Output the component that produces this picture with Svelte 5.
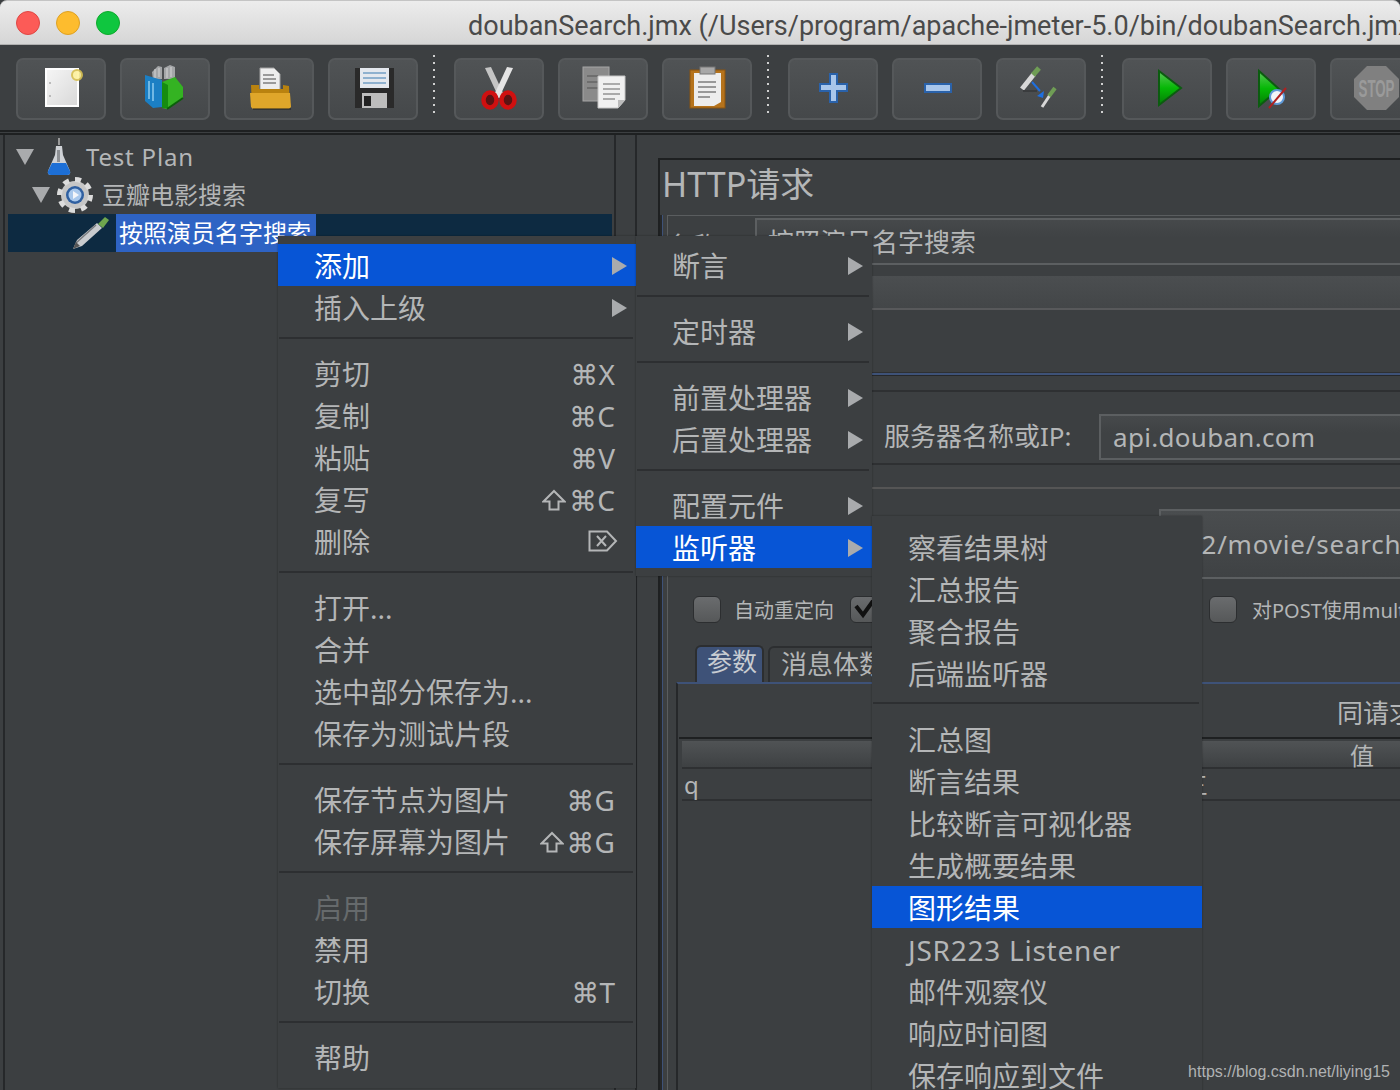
<script>
  const sep = { sep: true };
  const menu1 = [
    { t: '添加', arrow: true, sel: true }, { t: '插入上级', arrow: true }, sep,
    { t: '剪切', k: '⌘X' }, { t: '复制', k: '⌘C' }, { t: '粘贴', k: '⌘V' }, { t: '复写', k: '⌘C', shift: true }, { t: '删除', del: true }, sep,
    { t: '打开...' }, { t: '合并' }, { t: '选中部分保存为...' }, { t: '保存为测试片段' }, sep,
    { t: '保存节点为图片', k: '⌘G' }, { t: '保存屏幕为图片', k: '⌘G', shift: true }, sep,
    { t: '启用', off: true }, { t: '禁用' }, { t: '切换', k: '⌘T' }, sep,
    { t: '帮助' }
  ];
  const menu2 = [
    { t: '断言', arrow: true }, sep, { t: '定时器', arrow: true }, sep,
    { t: '前置处理器', arrow: true }, { t: '后置处理器', arrow: true }, sep,
    { t: '配置元件', arrow: true }, { t: '监听器', arrow: true, sel: true }
  ];
  const menu3 = [
    { t: '察看结果树' }, { t: '汇总报告' }, { t: '聚合报告' }, { t: '后端监听器' }, sep,
    { t: '汇总图' }, { t: '断言结果' }, { t: '比较断言可视化器' }, { t: '生成概要结果' }, { t: '图形结果', sel: true },
    { t: 'JSR223 Listener', latin: true }, { t: '邮件观察仪' }, { t: '响应时间图' }, { t: '保存响应到文件' }
  ];
</script>

{#snippet menu(items, cls)}
  <div class="menu {cls}">
    {#each items as it}
      {#if it.sep}
        <div class="msep"></div>
      {:else}
        <div class="mi" class:sel={it.sel} class:off={it.off} class:latin={it.latin}>
          <span>{it.t}</span>
          {#if it.arrow}<i class="arr"></i>{/if}
          {#if it.k}
            <span class="key">
              {#if it.shift}<svg class="shift" width="24" height="22" viewBox="0 0 24 22"><path d="M12 2L22.500 12.500H16.500V20.500H7.500V12.500H1.500z" fill="none" stroke="#b4b6b7" stroke-width="2"/></svg>{/if}
              {it.k}
            </span>
          {/if}
          {#if it.del}
            <svg class="del" width="30" height="22" viewBox="0 0 30 22"><path d="M1.500 1.500H19L28 11l-9 9.500H1.500z M9 6l9 10M18 6L9 16" fill="none" stroke="#b4b6b7" stroke-width="2"/></svg>
          {/if}
        </div>
      {/if}
    {/each}
  </div>
{/snippet}

<div class="app">
  <header class="title">
    <span class="dot red"></span><span class="dot amber"></span><span class="dot green"></span>
    <span class="ttext">doubanSearch.jmx (/Users/program/apache-jmeter-5.0/bin/doubanSearch.jmx)</span>
  </header>

  <div class="toolbar">
    <div class="tb"><svg viewBox="0 0 90 62"><defs><linearGradient id="pg" x1="0" x2="1" y1="0" y2="1"><stop offset="0" stop-color="#f6f6f6"/><stop offset="1" stop-color="#d8d8d8"/></linearGradient></defs><rect x="30" y="11" width="32" height="37" fill="url(#pg)" stroke="#fff" stroke-width="2"/><circle cx="34" cy="25" r="1" fill="#aaa"/><circle cx="34" cy="38" r="1" fill="#aaa"/><circle cx="61" cy="17" r="5" fill="#fff3a0" stroke="#d8c050" stroke-width="2" opacity=".9"/></svg></div>
    <div class="tb"><svg viewBox="0 0 90 62"><path d="M32 14l6-6 4 1v12l-9 1zM44 10l6-3 5 2v12H44z" fill="#a4a6a8"/><path d="M35 11v9M39 10v9M47 10v10M51 9v10" stroke="#d4d4d4"/><path d="M25 17l17 5v27l-9 1-8-7z" fill="#1b7fc4"/><path d="M29 23v18M33 25v18" stroke="#8ecbee" stroke-width="1.500"/><path d="M42 24l13-5 8 10v11L47 51l-5-1z" fill="#34b322"/><path d="M42 24l6 3v23l-6 0z" fill="#168c10"/><path d="M63 40l-16 11" stroke="#0b5f0a" stroke-width="2"/></svg></div>
    <div class="tb"><svg viewBox="0 0 90 62"><path d="M36 10h14l6 6v16H36z" fill="#ededed" stroke="#a0a0a0"/><path d="M39 17h11M39 21h13M39 25h13" stroke="#9a9a9a" stroke-width="2"/><path d="M27 27h8v4h24v-4l6 1 1 22H28z" fill="#b9820f"/><path d="M26 35h40l1 14-2 2H29l-2-2z" fill="#dfa62a"/><path d="M29 51h38" stroke="#1f2021" stroke-width="2" opacity=".5"/></svg></div>
    <div class="tb"><svg viewBox="0 0 90 62"><path d="M27 10h39v40H27z" fill="#2a2a2a"/><rect x="32" y="10" width="29" height="20" fill="#e4e8ee"/><path d="M35 15h23M35 20h23M35 25h23" stroke="#8fb1cf" stroke-width="2"/><rect x="34" y="35" width="25" height="15" fill="#bdbdbd"/><rect x="36" y="38" width="7" height="10" fill="#222"/></svg></div>
    <div class="sep"></div>
    <div class="tb"><svg viewBox="0 0 90 62"><path d="M31 10l6-1 13 28-5 3z" fill="#c4c4c4"/><path d="M59 10l-6-1-13 28 5 3z" fill="#e4e4e4"/><ellipse cx="36" cy="42" rx="6.500" ry="7.500" fill="#5a1414" stroke="#d01010" stroke-width="4.500"/><ellipse cx="54" cy="42" rx="6.500" ry="7.500" fill="#5a1414" stroke="#d01010" stroke-width="4.500"/></svg></div>
    <div class="tb"><svg viewBox="0 0 90 62"><rect x="25" y="9" width="26" height="34" fill="#8a8a8a" stroke="#a5a5a5"/><path d="M29 18h12M29 24h12M29 30h12" stroke="#6e6e6e" stroke-width="2"/><path d="M40 18h27v24l-7 8H40z" fill="#f0f0f0" stroke="#c4c4c4"/><path d="M45 26h17M45 31h17M45 36h17M45 41h12" stroke="#aaa" stroke-width="2"/><path d="M60 50v-8h7z" fill="#bbb"/></svg></div>
    <div class="tb"><svg viewBox="0 0 90 62"><rect x="28" y="12" width="35" height="38" fill="#b5731c" stroke="#8a5410"/><path d="M32 15h27v29l-7 4H32z" fill="#ededed"/><path d="M36 24h18M36 29h18M36 34h18M36 39h12" stroke="#999" stroke-width="2"/><rect x="38" y="9" width="15" height="7" fill="#a8a8a8" stroke="#777"/></svg></div>
    <div class="sep"></div>
    <div class="tb"><svg viewBox="0 0 90 62"><path d="M42 16h7v10h10v7H49v11h-7V33H32v-7h10z" fill="#a9c6ea" stroke="#2a62aa" stroke-width="2"/></svg></div>
    <div class="tb"><svg viewBox="0 0 90 62"><rect x="33" y="26" width="26" height="8" fill="#a9c6ea" stroke="#2a62aa" stroke-width="2"/></svg></div>
    <div class="tb"><svg viewBox="0 0 90 62"><path d="M26 31l12-15" stroke="#d8d8d8" stroke-width="5"/><path d="M37 17l6-7" stroke="#6f9d55" stroke-width="5"/><path d="M27 33h14" stroke="#3a3c3e" stroke-width="2"/><path d="M46 49l8-12" stroke="#d8d8d8" stroke-width="3"/><path d="M53 38l6-8" stroke="#6f9d55" stroke-width="4"/><path d="M36 24l8 9" stroke="#1e6fe0" stroke-width="2"/><path d="M48 33l-1 7-6-2z" fill="#1e6fe0"/></svg></div>
    <div class="sep"></div>
    <div class="tb"><svg viewBox="0 0 90 62"><defs><linearGradient id="pl" x1="0" x2="0" y1="0" y2="1"><stop offset="0" stop-color="#5cc858"/><stop offset=".5" stop-color="#06b806"/><stop offset="1" stop-color="#047c06"/></linearGradient></defs><path d="M37 13l22 17-22 17z" fill="url(#pl)" stroke="#0c5c10" stroke-width="2"/></svg></div>
    <div class="tb"><svg viewBox="0 0 90 62"><path d="M33 13l20 18-20 17z" fill="url(#pl)" stroke="#0c5c10" stroke-width="2"/><circle cx="51" cy="39" r="7" fill="#f2f4f8" stroke="#5f9ad8" stroke-width="2"/><path d="M43 50l17-20" stroke="#b02020" stroke-width="2"/></svg></div>
    <div class="tb"><svg viewBox="0 0 90 62"><path d="M37 8h19l13 13v18L56 52H37L24 39V21z" fill="#808080"/><text x="46.500" y="39" text-anchor="middle" class="stop" textLength="36" lengthAdjust="spacingAndGlyphs">STOP</text></svg></div>
    <div class="sep"></div>
  </div>

  <div class="split">
    <aside class="tree">
      <div class="node l0">
        <i class="tri"></i>
        <svg class="ic" width="26" height="38" viewBox="0 0 26 38"><path d="M13 0v7" stroke="#999" stroke-width="2"/><path d="M10 8h6l1 9 7 16q1 4-3 4H5q-4 0-3-4l7-16z" fill="#cfd2d6"/><path d="M6 25h14l4 8q1 4-3 4H5q-4 0-3-4z" fill="#1d6fd6"/><path d="M11 12h3v12h-3z" fill="#8d9094"/></svg>
        <span>Test Plan</span>
      </div>
      <div class="node l1">
        <i class="tri"></i>
        <svg class="ic" width="38" height="38" viewBox="0 0 38 38"><circle cx="19" cy="19" r="14" fill="#c6c6c6"/><circle cx="19" cy="19" r="15.500" fill="none" stroke="#dcdcdc" stroke-width="5" stroke-dasharray="6 6.100"/><circle cx="19" cy="19" r="9" fill="#2f5fa0"/><circle cx="19" cy="19" r="6.500" fill="#a9c8ec"/><path d="M17 15l6 4-6 4z" fill="#f4f6fa"/></svg>
        <span>豆瓣电影搜索</span>
      </div>
      <div class="node l2 selrow">
        <svg class="ic" width="38" height="34" viewBox="0 0 38 34"><path d="M1 33l4-9L25 7l5 5-20 18z" fill="#c9cbce"/><path d="M4 27l20-18" stroke="#77797c" stroke-width="1.500"/><path d="M1 33l3-7 4 4z" fill="#555"/><path d="M26 8l7-7 4 3-6 8z" fill="#6fa64e"/></svg>
        <span class="seltext">按照演员名字搜索</span>
      </div>
    </aside>

    <main class="right">
      <div class="form">
        <h1>HTTP请求</h1>
        <div class="frame">
          <div class="namebox">
            <label class="nlabel" for="nm">名称:</label>
            <div class="field nfield" id="nm">按照演员名字搜索</div>
          </div>
          <div class="band"></div>
          <div class="spacer a"></div>
          <div class="server">
            <span class="slabel">服务器名称或IP:</span>
            <div class="field sfield">api.douban.com</div>
          </div>
          <div class="pathrow"><div class="field pfield">/v2/movie/search</div></div>
          <div class="checks">
            <span class="cb"></span><span class="cl">自动重定向</span>
            <span class="cb on"><svg width="24" height="22" viewBox="0 0 24 22"><path d="M4 8l7 9L21 3" fill="none" stroke="#111" stroke-width="4"/></svg></span>
            <span class="cb far"></span><span class="cl">对POST使用multipart / form-data</span>
          </div>
          <div class="tabs">
            <span class="tab act">参数</span><span class="tab">消息体数据</span>
          </div>
          <div class="panel">
            <div class="phead">同请求一起发送参数:</div>
            <div class="thead"><span>值</span></div>
            <div class="trow"><span class="q">q</span><span class="v">三</span></div>
          </div>
        </div>
      </div>
    </main>
  </div>

  {@render menu(menu1, 'm1')}
  {@render menu(menu2, 'm2')}
  {@render menu(menu3, 'm3')}

  <div class="mark">https://blog.csdn.net/liying15</div>
</div>

<style>
  :global(body) { margin: 0; background: #3c3f41; }
  .app {
    position: relative; width: 1400px; height: 1090px; overflow: hidden; background: #3c3f41;
    color: #b4b6b7; font-family: "Noto Sans", "Noto Sans CJK SC", sans-serif;
  }
  .title {
    height: 45px; box-sizing: border-box; display: flex; align-items: center; gap: 16px; padding-left: 16px;
    background: linear-gradient(#ececec, #d6d6d6); border-top: 1px solid #c4c4c4; border-bottom: 1px solid #b0b0b0;
    border-radius: 7px 7px 0 0; white-space: nowrap; overflow: hidden;
  }
  .dot { width: 24px; height: 24px; border-radius: 50%; box-sizing: border-box; flex: none; }
  .red { background: #fc5b57; border: 1px solid #df4744; }
  .amber { background: #fdbc2e; border: 1px solid #dea123; }
  .green { background: #0fc63f; border: 1px solid #0eaa2c; }
  .ttext { margin-left: 332px; padding-top: 6px; font: 27px Roboto, sans-serif; color: #4a4a4a; }

  .toolbar {
    height: 87px; box-sizing: border-box; padding: 13px 0 0 16px; display: flex; gap: 14px; align-items: flex-start;
    border-bottom: 2px solid #1e2021; overflow: hidden;
  }
  .tb {
    flex: none; width: 90px; height: 62px; box-sizing: border-box; border: 2px solid #55585a; border-radius: 7px;
    background: linear-gradient(#505355, #45484a);
  }
  .tb svg { display: block; width: 90px; height: 62px; margin: -2px; }
  .stop { font: bold 24px "Liberation Sans", sans-serif; fill: #9a9a9a; }
  .sep {
    flex: none; width: 2px; height: 60px; margin: -3px 5px 0 1px;
    background: repeating-linear-gradient(#d0d0d0 0 2px, transparent 2px 7px);
  }

  .split { display: flex; margin-top: 1px; border-top: 2px solid #1e2021; height: 960px; }
  .tree { margin-left: 3px; width: 613px; box-sizing: border-box; border: 2px solid #26282a; border-top: 0; padding-top: 3px; font-size: 24px; flex: none; }
  .node { height: 38px; display: flex; align-items: center; white-space: nowrap; }
  .tri { width: 0; height: 0; border-left: 9px solid transparent; border-right: 9px solid transparent; border-top: 16px solid #a9abad; flex: none; }
  .l0 { padding-left: 11px; }
  .l0 .ic { margin-left: 12px; }
  .l0 span { margin: 0 0 1px 14px; letter-spacing: .8px; }
  .l1 { padding-left: 27px; }
  .l1 .ic { margin-left: 6px; }
  .l1 span { margin: 0 0 4px 8px; }
  .selrow { margin: 0 2px 0 3px; background: #0d2a41; padding-left: 64px; color: #fff; }
  .seltext { background: #2e63c4; height: 38px; line-height: 38px; padding: 0 5px 0 3px; margin-left: 6px; }

  .right { flex: 1; min-width: 0; margin-left: 19px; border-left: 2px solid #26282a; padding: 23px 0 0 21px; overflow: hidden; }
  .form { border: solid #1e2021; border-width: 2px 0 0 2px; height: 930px; }
  h1 { margin: 0 0 0 2px; height: 55px; line-height: 48px; font-size: 34px; font-weight: 400; white-space: nowrap; }
  .frame { margin-left: 2px; border-left: 1px solid #3e5278; box-shadow: -2px 0 0 #26282a; padding-left: 4px; position: relative; }
  .frame::before { content: ""; position: absolute; left: 4px; top: 0; bottom: -300px; width: 1px; background: #5a5d5f; }
  .namebox { height: 61px; box-sizing: border-box; border-top: 1px solid #5a5d5f; padding: 2px 0 0; display: flex; gap: 29px; align-items: flex-start; font-size: 26px; white-space: nowrap; overflow: hidden; }
  .nlabel { padding-top: 8px; }
  .field { box-sizing: border-box; border: 2px solid #5c5f61; white-space: nowrap; background: linear-gradient(#46494b, #3f4244 40%); }
  .nfield { flex: 1; height: 47px; line-height: 44px; padding-left: 11px; border-width: 2px 0 2px 2px; }
  .band { height: 32px; border-bottom: 2px solid #58595b; background: linear-gradient(#4b4e50, #434648); }
  .spacer.a { height: 63px; border-bottom: 2px solid #3e5278; box-shadow: 0 1px 0 #26282a, inset 0 -1px 0 #2e3032; }
  .server { margin-top: 15px; height: 75px; box-sizing: border-box; border-top: 2px solid #2e3032; border-bottom: 2px solid #2e3032; display: flex; align-items: flex-start; padding: 22px 0 0 217px; white-space: nowrap; overflow: hidden; }
  .slabel { font-size: 26px; width: 215px; flex: none; line-height: 44px; }
  .sfield { flex: 1; height: 46px; line-height: 43px; padding-left: 12px; font-size: 26px; letter-spacing: .3px; border-width: 2px 0 2px 2px; }
  .pathrow { margin-top: 22px; border-top: 2px solid #555; height: 0; }
  .pfield { margin: 20px 0 0 492px; height: 70px; line-height: 66px; padding-left: 16px; font-size: 26px; letter-spacing: .8px; border-width: 2px 0 2px 2px; overflow: hidden; background: linear-gradient(#4a4d4f, #3f4244); }
  .checks { margin-top: 106px; height: 28px; display: flex; align-items: center; white-space: nowrap; font-size: 20px; padding-left: 26px; overflow: hidden; }
  .cb { flex: none; width: 28px; height: 27px; box-sizing: border-box; border-radius: 6px; background: linear-gradient(#6a6c6e, #565859); border: 1px solid #2c2e30; display: block; }
  .cb svg { display: block; margin: 1px; }
  .cl { margin-left: 13px; }
  .cb.on { margin-left: 16px; }
  .cb.far { margin-left: 331px; }
  .cb.far + .cl { margin-left: 15px; }
  .tabs { margin: 22px 0 0 28px; height: 37px; display: flex; gap: 4px; align-items: flex-end; white-space: nowrap; font-size: 26px; }
  .tab { height: 34px; line-height: 32px; padding: 0 11px; border: 2px solid #2c2e30; border-bottom: 0; border-radius: 6px 6px 0 0; }
  .tab.act { background: #3e5278; padding: 0 5px 0 10px; width: 50px; flex: none; font-size: 25px; line-height: 28px; border-color: #2c2e30; color: #c8ccd2; height: 35px; }
  .panel { margin-left: 9px; border-top: 2px solid #3e5278; border-left: 2px solid #26282a; padding-left: 1px; height: 420px; overflow: hidden; }
  .phead { height: 53px; line-height: 58px; font-size: 26px; padding-left: 658px; white-space: nowrap; border-bottom: 2px solid #1e2021; }
  .thead { margin-left: 3px; margin-top: 2px; height: 26px; background: linear-gradient(#505355, #3e4143); border-bottom: 2px solid #2e3032; font-size: 24px; line-height: 30px; padding-left: 668px; }
  .trow { margin-left: 3px; height: 30px; border-bottom: 2px solid #2e3032; display: flex; font-size: 24px; line-height: 32px; white-space: nowrap; }
  .q { margin-left: 2px; width: 500px; flex: none; }

  .menu { position: absolute; box-sizing: border-box; background: #3c3f41; font-size: 28px; box-shadow: 0 0 2px rgba(0,0,0,.35); white-space: nowrap; }
  .m1 { left: 278px; top: 236px; width: 358px; height: 852px; padding: 8px 0 0; }
  .m2 { left: 636px; top: 236px; width: 236px; height: 340px; padding: 8px 0 0; }
  .m3 { left: 872px; top: 516px; width: 330px; height: 600px; padding: 10px 0 0; }
  .m3 .msep { padding-top: 8px; }
  .mi { height: 42px; line-height: 45px; padding-left: 36px; position: relative; }
  .mi.latin { letter-spacing: .75px; }
  .mi.sel { background: #0755d6; color: #fff; }
  .mi.off { color: #666a6c; }
  .msep { height: 24px; box-sizing: border-box; padding-top: 9px; margin: 0 3px 0 1px; }
  .msep::before { content: ""; display: block; height: 2px; background: #2d2f31; }
  .arr { position: absolute; right: 9px; top: 13px; width: 0; height: 0; border-left: 15px solid #a9abad; border-top: 9px solid transparent; border-bottom: 9px solid transparent; }
  .key { position: absolute; right: 21px; top: 1px; display: flex; align-items: center; height: 42px; font-family: "Noto Sans", "DejaVu Sans", sans-serif; font-size: 28px; color: #b4b6b7; }
  .shift { margin-right: 3px; }
  .del { position: absolute; right: 18px; top: 10px; }
  .mark { position: absolute; right: 10px; top: 1063px; font: 16px "Liberation Sans", sans-serif; color: #b0b2b3; z-index: 5; }
</style>
